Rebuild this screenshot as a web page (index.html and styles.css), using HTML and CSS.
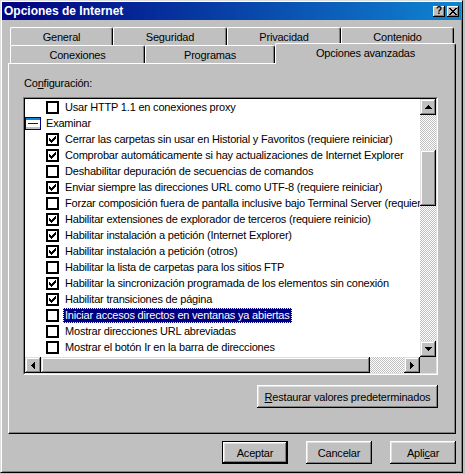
FILE: index.html
```html
<!DOCTYPE html>
<html lang="es">
<head>
<meta charset="utf-8">
<title>Opciones de Internet</title>
<link rel="stylesheet" href="styles.css">
</head>
<body>
<svg class="defs" width="0" height="0" aria-hidden="true">
  <defs>
    <symbol id="cb-off" viewBox="0 0 13 13">
      <rect x="1" y="1" width="11" height="11" fill="#fff" stroke="#000" stroke-width="2"/>
    </symbol>
    <symbol id="cb-on" viewBox="0 0 13 13">
      <rect x="1" y="1" width="11" height="11" fill="#fff" stroke="#000" stroke-width="2"/>
      <path d="M3 5h1v1h1v1h1v-1h1v-1h1v-1h1v-1h1v3h-1v1h-1v1h-1v1h-1v1h-1v-1h-1v-1h-1z" fill="#000"/>
    </symbol>
    <symbol id="ar-up" viewBox="0 0 7 4"><path d="M3 0h1v1h1v1h1v1h1v1h-7v-1h1v-1h1v-1h1z" fill="#000"/></symbol>
    <symbol id="ar-down" viewBox="0 0 7 4"><path d="M0 0h7v1h-1v1h-1v1h-1v1h-1v-1h-1v-1h-1v-1h-1z" fill="#000"/></symbol>
    <symbol id="ar-left" viewBox="0 0 4 7"><path d="M3 0h1v7h-1v-1h-1v-1h-1v-1h-1v-1h1v-1h1v-1h1z" fill="#000"/></symbol>
    <symbol id="ar-right" viewBox="0 0 4 7"><path d="M0 0h1v1h1v1h1v1h1v1h-1v1h-1v1h-1v1h-1z" fill="#000"/></symbol>
  </defs>
</svg>

<div class="window">
  <div class="titlebar">
    <span class="title">Opciones de Internet</span>
    <div class="tb-buttons">
      <span class="tb-btn">?</span>
      <span class="tb-btn">
        <svg width="8" height="7" viewBox="0 0 8 7" shape-rendering="crispEdges"><path d="M0 0h2v1h1v1h2v-1h1v-1h2v1h-1v1h-1v1h-1v1h1v1h1v1h1v1h-2v-1h-1v-1h-2v1h-1v1h-2v-1h1v-1h1v-1h1v-1h-1v-1h-1v-1h-1z" fill="#000"/></svg>
      </span>
    </div>
  </div>

  <div class="client">
    <div class="tabs">
      <div class="tabrow">
        <div class="tab t-general">General</div>
        <div class="tab t-seguridad">Seguridad</div>
        <div class="tab t-privacidad">Privacidad</div>
        <div class="tab t-contenido">Contenido</div>
      </div>
      <div class="tabrow">
        <div class="tab t-conexiones">Conexiones</div>
        <div class="tab t-programas">Programas</div>
        <div class="tab tab-active t-avanzadas">Opciones avanzadas</div>
      </div>
    </div>

    <div class="panel">
      <div class="label">Co<u>n</u>figuración:</div>
      <div class="listbox">
        <div class="listinner">
          <div class="items">
            <div class="row lvl1"><svg class="cb" shape-rendering="crispEdges"><use href="#cb-off"/></svg><span class="txt">Usar HTTP 1.1 en conexiones proxy</span></div>
            <div class="row lvl0">
              <svg class="cat" width="16" height="13" viewBox="0 0 16 13" shape-rendering="crispEdges">
                <rect x="0" y="0" width="16" height="13" fill="#000080"/>
                <rect x="1" y="3" width="14" height="9" fill="#fff"/>
                <rect x="1" y="1" width="14" height="2" fill="#1084d0"/>
                <rect x="3" y="6" width="10" height="1" fill="#0000ff"/>
                <rect x="1" y="10" width="14" height="2" fill="#c0c0c0"/>
              </svg><span class="txt">Examinar</span></div>
            <div class="row lvl1"><svg class="cb" shape-rendering="crispEdges"><use href="#cb-on"/></svg><span class="txt">Cerrar las carpetas sin usar en Historial y Favoritos (requiere reiniciar)</span></div>
            <div class="row lvl1"><svg class="cb" shape-rendering="crispEdges"><use href="#cb-on"/></svg><span class="txt">Comprobar automáticamente si hay actualizaciones de Internet Explorer</span></div>
            <div class="row lvl1"><svg class="cb" shape-rendering="crispEdges"><use href="#cb-off"/></svg><span class="txt">Deshabilitar depuración de secuencias de comandos</span></div>
            <div class="row lvl1"><svg class="cb" shape-rendering="crispEdges"><use href="#cb-on"/></svg><span class="txt">Enviar siempre las direcciones URL como UTF-8 (requiere reiniciar)</span></div>
            <div class="row lvl1"><svg class="cb" shape-rendering="crispEdges"><use href="#cb-off"/></svg><span class="txt">Forzar composición fuera de pantalla inclusive bajo Terminal Server (requiere reiniciar)</span></div>
            <div class="row lvl1"><svg class="cb" shape-rendering="crispEdges"><use href="#cb-on"/></svg><span class="txt">Habilitar extensiones de explorador de terceros (requiere reinicio)</span></div>
            <div class="row lvl1"><svg class="cb" shape-rendering="crispEdges"><use href="#cb-on"/></svg><span class="txt">Habilitar instalación a petición (Internet Explorer)</span></div>
            <div class="row lvl1"><svg class="cb" shape-rendering="crispEdges"><use href="#cb-on"/></svg><span class="txt">Habilitar instalación a petición (otros)</span></div>
            <div class="row lvl1"><svg class="cb" shape-rendering="crispEdges"><use href="#cb-off"/></svg><span class="txt">Habilitar la lista de carpetas para los sitios FTP</span></div>
            <div class="row lvl1"><svg class="cb" shape-rendering="crispEdges"><use href="#cb-on"/></svg><span class="txt">Habilitar la sincronización programada de los elementos sin conexión</span></div>
            <div class="row lvl1"><svg class="cb" shape-rendering="crispEdges"><use href="#cb-on"/></svg><span class="txt">Habilitar transiciones de página</span></div>
            <div class="row lvl1"><svg class="cb" shape-rendering="crispEdges"><use href="#cb-off"/></svg><span class="txt selected">Iniciar accesos directos en ventanas ya abiertas</span></div>
            <div class="row lvl1"><svg class="cb" shape-rendering="crispEdges"><use href="#cb-off"/></svg><span class="txt">Mostrar direcciones URL abreviadas</span></div>
            <div class="row lvl1"><svg class="cb" shape-rendering="crispEdges"><use href="#cb-off"/></svg><span class="txt">Mostrar el botón Ir en la barra de direcciones</span></div>
            <div class="row lvl1"><svg class="cb" shape-rendering="crispEdges"><use href="#cb-on"/></svg></div>
          </div>
          <div class="vscroll">
            <div class="sbtn"><svg class="arr-v" shape-rendering="crispEdges"><use href="#ar-up"/></svg></div>
            <div class="track vt-top"></div>
            <div class="thumb vthumb"></div>
            <div class="track vt-rest"></div>
            <div class="sbtn"><svg class="arr-v" shape-rendering="crispEdges"><use href="#ar-down"/></svg></div>
          </div>
          <div class="hscroll">
            <div class="sbtn"><svg class="arr-h" shape-rendering="crispEdges"><use href="#ar-left"/></svg></div>
            <div class="thumb hthumb"></div>
            <div class="track ht-rest"></div>
            <div class="sbtn"><svg class="arr-h" shape-rendering="crispEdges"><use href="#ar-right"/></svg></div>
          </div>
          <div class="corner"></div>
        </div>
      </div>
      <div class="restore-row">
        <button class="btn btn-restore"><u>R</u>estaurar valores predeterminados</button>
      </div>
    </div>

    <div class="dialog-buttons">
      <button class="btn btn-default">Aceptar</button>
      <button class="btn">Cancelar</button>
      <button class="btn">Apli<u>c</u>ar</button>
    </div>
  </div>
</div>
</body>
</html>
```

FILE: styles.css
```css
* { box-sizing: border-box; }

html, body {
  margin: 0;
  padding: 0;
  background: #c0c0c0;
}

body {
  font-family: "Liberation Sans", Arial, sans-serif;
  font-size: 11px;
  letter-spacing: -0.2px;
  color: #000;
  width: 465px;
  height: 474px;
  overflow: hidden;
}

.defs { position: absolute; width: 0; height: 0; }

/* window frame */
.window {
  width: 463px;
  height: 473px;
  background: #c0c0c0;
  border: 1px solid;
  border-color: #dfdfdf #000 #000 #dfdfdf;
  box-shadow: inset 1px 1px #fff, inset -1px -1px #808080;
  padding: 1px;
  display: flex;
  flex-direction: column;
}

.titlebar {
  height: 18px;
  flex: none;
  display: flex;
  align-items: center;
  padding: 0 2px 0 2px;
  background: linear-gradient(to right, #000080, #1084d0);
}

.title {
  color: #fff;
  font-weight: bold;
  font-size: 12px;
  letter-spacing: 0;
}

.tb-buttons {
  margin-left: auto;
  display: flex;
  gap: 2px;
}

.tb-btn {
  width: 12px;
  height: 11px;
  background: #c0c0c0;
  box-shadow: inset -1px -1px #000, inset 1px 1px #fff, inset -2px -2px #808080;
  display: flex;
  align-items: center;
  justify-content: center;
  font-weight: bold;
  font-size: 10px;
  letter-spacing: 0;
  line-height: 1;
}

.client {
  flex: 1;
  padding: 7px 0 0 6px;
}

/* tabs */
.tabs {
  padding-left: 2px;
  position: relative;
  z-index: 1;
}

.tabrow {
  display: flex;
  height: 18px;
}

.tab {
  height: 18px;
  background: #c0c0c0;
  border-top: 1px solid #fff;
  border-left: 1px solid #fff;
  border-right: 1px solid #000;
  border-radius: 2px 3px 0 0;
  box-shadow: inset -1px 0 #808080;
  text-align: center;
  line-height: 16px;
  padding-top: 1px;
}

.t-general { width: 103px; }
.t-seguridad { width: 114px; }
.t-privacidad { width: 114px; }
.t-contenido { width: 113px; }
.t-conexiones { width: 135px; }
.t-programas { width: 130px; }

.tab-active {
  width: 181px;
  height: 21px;
  margin-top: -2px;
  position: relative;
  z-index: 2;
  padding-top: 1px;
}

/* panel */
.panel {
  width: 448px;
  height: 371px;
  border: 1px solid;
  border-color: #fff #000 #000 #fff;
  box-shadow: inset -1px -1px #808080;
  padding: 13px 0 0 14px;
}

.label {
  line-height: 13px;
  margin-left: 1px;
  margin-bottom: 7px;
}

.listbox {
  width: 415px;
  height: 278px;
  border: 1px solid;
  border-color: #808080 #fff #fff #808080;
}

.listinner {
  width: 100%;
  height: 100%;
  border: 1px solid;
  border-color: #000 #dfdfdf #dfdfdf #000;
  background: #fff;
  display: grid;
  grid-template-columns: 1fr 16px;
  grid-template-rows: 1fr 16px;
}

.items {
  overflow: hidden;
  white-space: nowrap;
}

.row {
  height: 16px;
  display: flex;
  align-items: center;
}

.row.lvl1 { padding-left: 21px; }
.row.lvl0 { padding-left: 0; }

.cb {
  width: 13px;
  height: 13px;
  flex: none;
}

.cat { flex: none; }

.txt {
  margin-left: 4px;
  padding: 0 2px;
  line-height: 15px;
  height: 15px;
}

.lvl0 .txt { margin-left: 3px; }

.txt.selected {
  background: #000080;
  color: #fff;
  outline: 1px dotted #ffff80;
  outline-offset: -1px;
}

/* scrollbars */
.vscroll {
  display: flex;
  flex-direction: column;
}

.hscroll {
  display: flex;
}

.sbtn {
  width: 16px;
  height: 16px;
  flex: none;
  background: #c0c0c0;
  box-shadow: inset -1px -1px #000, inset 1px 1px #dfdfdf, inset -2px -2px #808080, inset 2px 2px #fff;
  display: flex;
  align-items: center;
  justify-content: center;
}

.arr-v { width: 7px; height: 4px; }
.arr-h { width: 4px; height: 7px; }

.track {
  background: repeating-conic-gradient(#c0c0c0 0% 25%, #fff 0% 50%) 0 0 / 2px 2px;
}

.thumb {
  background: #c0c0c0;
  box-shadow: inset -1px -1px #000, inset 1px 1px #dfdfdf, inset -2px -2px #808080, inset 2px 2px #fff;
  flex: none;
}

.vt-top { height: 35px; flex: none; }
.vthumb { height: 56px; }
.vt-rest { flex: 1; }

.hthumb { width: 329px; }
.ht-rest { flex: 1; }

.corner { background: #c0c0c0; }

/* buttons */
.btn {
  font: inherit;
  letter-spacing: inherit;
  color: #000;
  height: 23px;
  width: 66px;
  padding: 0;
  margin: 0;
  border: none;
  background: #c0c0c0;
  box-shadow: inset -1px -1px #000, inset 1px 1px #fff, inset -2px -2px #808080, inset 2px 2px #dfdfdf;
}

.btn-default {
  border: 1px solid #000;
}

.restore-row {
  width: 415px;
  display: flex;
  justify-content: flex-end;
  margin-top: 10px;
}

.btn-restore { width: 181px; }

.dialog-buttons {
  display: flex;
  justify-content: flex-end;
  gap: 18px;
  width: 448px;
  margin-top: 7px;
}
```
